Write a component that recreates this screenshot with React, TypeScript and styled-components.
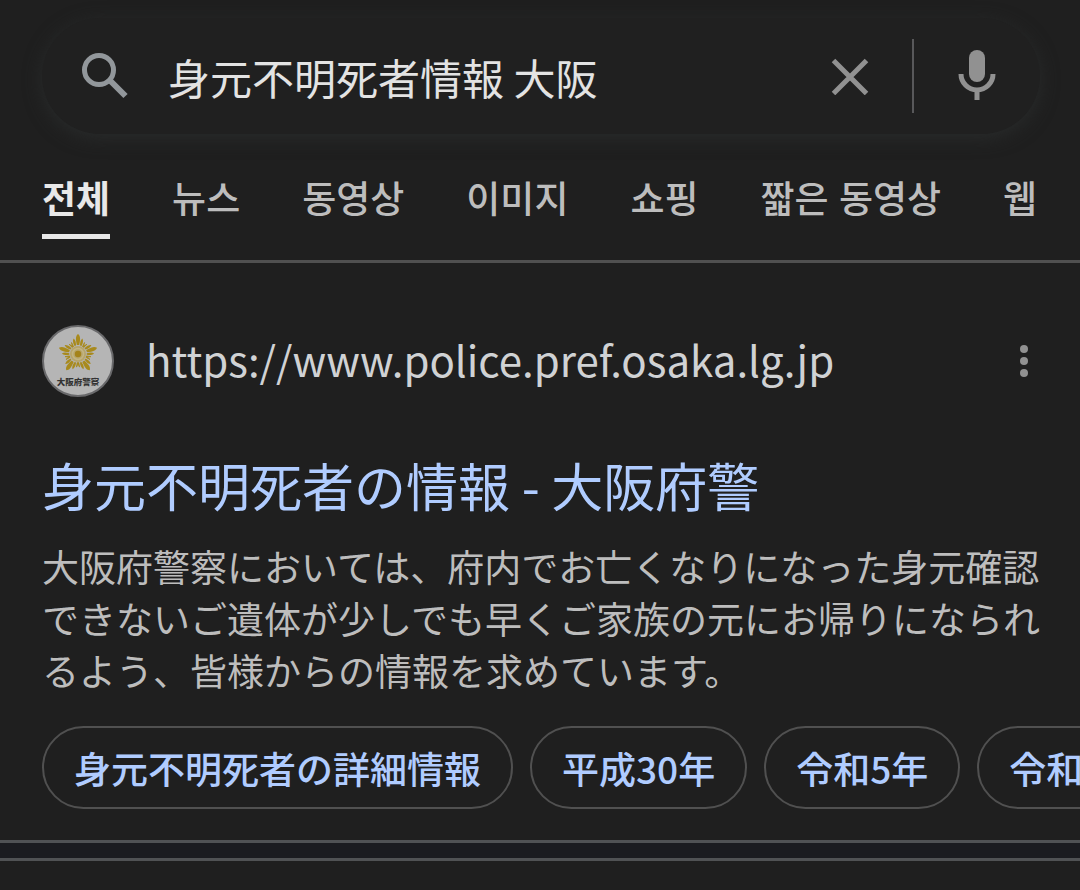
import React, { useState } from "react";
import styled, { createGlobalStyle } from "styled-components";

const GlobalStyle = createGlobalStyle`
  * { box-sizing: border-box; }
  html { background: #1f1f1f; }
  body {
    margin: 0;
    background: #1f1f1f;
    color: #bfbfbf;
    font-family: "Noto Sans CJK JP", "Noto Sans CJK KR", sans-serif;
    overflow-x: hidden;
  }
`;

const Page = styled.div`
  display: flex;
  flex-direction: column;
  overflow: hidden;
`;

const SearchBar = styled.form`
  display: flex;
  align-items: center;
  height: 116px;
  margin: 18px 40px 0 42px;
  padding: 0 38px 0 36px;
  border-radius: 58px;
  background: #202020;
  box-shadow: 0 4px 18px 0 #292b2b;
`;

const IconButton = styled.button`
  display: flex;
  flex: none;
  align-items: center;
  justify-content: center;
  padding: 0;
  border: 0;
  background: none;
  color: ${(p) => p.color ?? "#919191"};
`;

const Query = styled.input`
  flex: 1;
  min-width: 0;
  height: 64px;
  margin: 0 24px 0 36px;
  padding: 0;
  border: 0;
  outline: 0;
  background: none;
  color: #e3e3e3;
  font-family: inherit;
  font-size: 42px;
`;

const Separator = styled.span`
  flex: none;
  width: 2px;
  height: 74px;
  margin: 0 38px 0 43px;
  background: #58585a;
`;

const Tabs = styled.nav`
  display: flex;
  gap: 62px;
  margin-top: 36px;
  padding: 0 42px 21px;
  border-bottom: 3px solid #505050;
  font-family: "Noto Sans CJK KR", sans-serif;
  white-space: nowrap;
`;

const Tab = styled.a<{ $active?: boolean }>`
  flex: none;
  height: 69px;
  border-bottom: 5px solid ${(p) => (p.$active ? "#e8e8e8" : "transparent")};
  color: ${(p) => (p.$active ? "#e8e8e8" : "#bdbdbd")};
  font-size: 37px;
  font-weight: ${(p) => (p.$active ? 700 : 500)};
  line-height: 54px;
  text-decoration: none;
`;

const Result = styled.article`
  display: flex;
  flex-direction: column;
  padding: 62px 0 31px 42px;
`;

const Source = styled.header`
  display: flex;
  align-items: center;
  padding-right: 42px;
`;

const Favicon = styled.svg`
  flex: none;
  width: 72px;
  height: 72px;
`;

const SiteUrl = styled.cite`
  flex: 1;
  margin-left: 32px;
  color: #d0d2d4;
  font-size: 42px;
  font-style: normal;
  line-height: 68px;
  padding-bottom: 4px;
`;

const Title = styled.h3`
  margin: 50px 0 0;
  font-size: 52px;
  font-weight: 400;
  line-height: 76px;
`;

const TitleLink = styled.a`
  color: #b0ccff;
  text-decoration: none;
`;

const Snippet = styled.p`
  margin: 17px 36px 0 0;
  color: #bdbdbd;
  font-size: 37px;
  line-height: 52px;
`;

const Chips = styled.div`
  display: flex;
  gap: 17px;
  margin-top: 30px;
  overflow: hidden;
`;

const Chip = styled.a`
  flex: none;
  height: 83px;
  padding: 0 30px;
  border: 2px solid #505050;
  border-radius: 42px;
  color: #b0ccff;
  font-size: 37px;
  font-weight: 500;
  line-height: 80px;
  text-decoration: none;
  white-space: nowrap;
`;

const Divider = styled.hr`
  width: 100%;
  height: 21px;
  margin: 0;
  border: solid #505254;
  border-width: 3px 0;
  background: #1b1c20;
`;

const tabs = ["전체", "뉴스", "동영상", "이미지", "쇼핑", "짧은 동영상", "웹"];
const chips = ["身元不明死者の詳細情報", "平成30年", "令和5年", "令和4年"];
const rays = [0, 72, 144, 216, 288];

const PoliceEmblem = () => (
  <Favicon viewBox="0 0 72 72" role="img" aria-label="大阪府警察">
    <circle cx="36" cy="36" r="35" fill="#b5b5b5" stroke="#69696b" strokeWidth="2" />
    <g transform="translate(36 29)">
      {rays.map((angle) => (
        <g key={angle} transform={`rotate(${angle})`} fill="#a88a1d">
          <path d="M0-20C2.500-18 2.500-15.500 1.200-9H-1.200C-2.500-15.500-2.500-18 0-20Z" />
          <path d="M-4.500-15.500C-2.500-14-2-12-2-8.500L-3.500-8C-5-11-5.500-13-4.500-15.500Z" />
          <path d="M4.500-15.500C2.500-14 2-12 2-8.500L3.500-8C5-11 5.500-13 4.500-15.500Z" />
          <path d="M-6.500-11.500-4.500-7.500-5.500-7Z" stroke="#a88a1d" strokeWidth=".8" />
          <path d="M6.500-11.500 4.500-7.500 5.500-7Z" stroke="#a88a1d" strokeWidth=".8" />
        </g>
      ))}
      <circle r="8" fill="#b7a56a" />
      <circle r="5.500" fill="none" stroke="#c2b583" strokeWidth="1.500" />
      <circle r="3.200" fill="#a4831a" />
    </g>
    <text x="36" y="60" textAnchor="middle" fontSize="8.500" fontWeight="900" fill="#333">
      大阪府警察
    </text>
  </Favicon>
);

export default function App() {
  const [query, setQuery] = useState("身元不明死者情報 大阪");
  return (
    <Page>
      <GlobalStyle />
      <SearchBar role="search" onSubmit={(e) => e.preventDefault()}>
        <IconButton type="submit" aria-label="검색" color="#92979b">
          <svg width="54" height="54" viewBox="0 0 54 54" fill="none" stroke="currentColor">
            <circle cx="21" cy="21" r="14.500" strokeWidth="5" />
            <path d="M32 31.500 47.500 47" strokeWidth="6" />
          </svg>
        </IconButton>
        <Query aria-label="검색어" value={query} onChange={(e) => setQuery(e.target.value)} />
        <IconButton type="button" aria-label="지우기" onClick={() => setQuery("")}>
          <svg width="38" height="38" viewBox="0 0 38 38" fill="none" stroke="currentColor" strokeWidth="5">
            <path d="M2.500 3.500 35.500 36.500M35.500 3.500 2.500 36.500" />
          </svg>
        </IconButton>
        <Separator />
        <IconButton type="button" aria-label="음성 검색">
          <svg width="50" height="52" viewBox="0 0 50 52">
            <rect x="17" y="0" width="16" height="32" rx="8" fill="currentColor" />
            <path d="M9 24a16 16 0 0 0 32 0M25 40v10" fill="none" stroke="currentColor" strokeWidth="5" />
          </svg>
        </IconButton>
      </SearchBar>
      <Tabs>
        {tabs.map((label, i) => (
          <Tab key={label} href="#" lang="ko" $active={i === 0}>
            {label}
          </Tab>
        ))}
      </Tabs>
      <Result lang="ja">
        <Source>
          <PoliceEmblem />
          <SiteUrl>https://www.police.pref.osaka.lg.jp</SiteUrl>
          <IconButton type="button" aria-label="메뉴">
            <svg width="28" height="36" viewBox="0 0 28 36" fill="currentColor">
              <circle cx="14" cy="6" r="4" />
              <circle cx="14" cy="18" r="4" />
              <circle cx="14" cy="30" r="4" />
            </svg>
          </IconButton>
        </Source>
        <Title>
          <TitleLink href="#">身元不明死者の情報 - 大阪府警</TitleLink>
        </Title>
        <Snippet>
          大阪府警察においては、府内でお亡くなりになった身元確認できないご遺体が少しでも早くご家族の元にお帰りになられるよう、皆様からの情報を求めています。
        </Snippet>
        <Chips>
          {chips.map((label) => (
            <Chip key={label} href="#">
              {label}
            </Chip>
          ))}
        </Chips>
      </Result>
      <Divider />
    </Page>
  );
}
